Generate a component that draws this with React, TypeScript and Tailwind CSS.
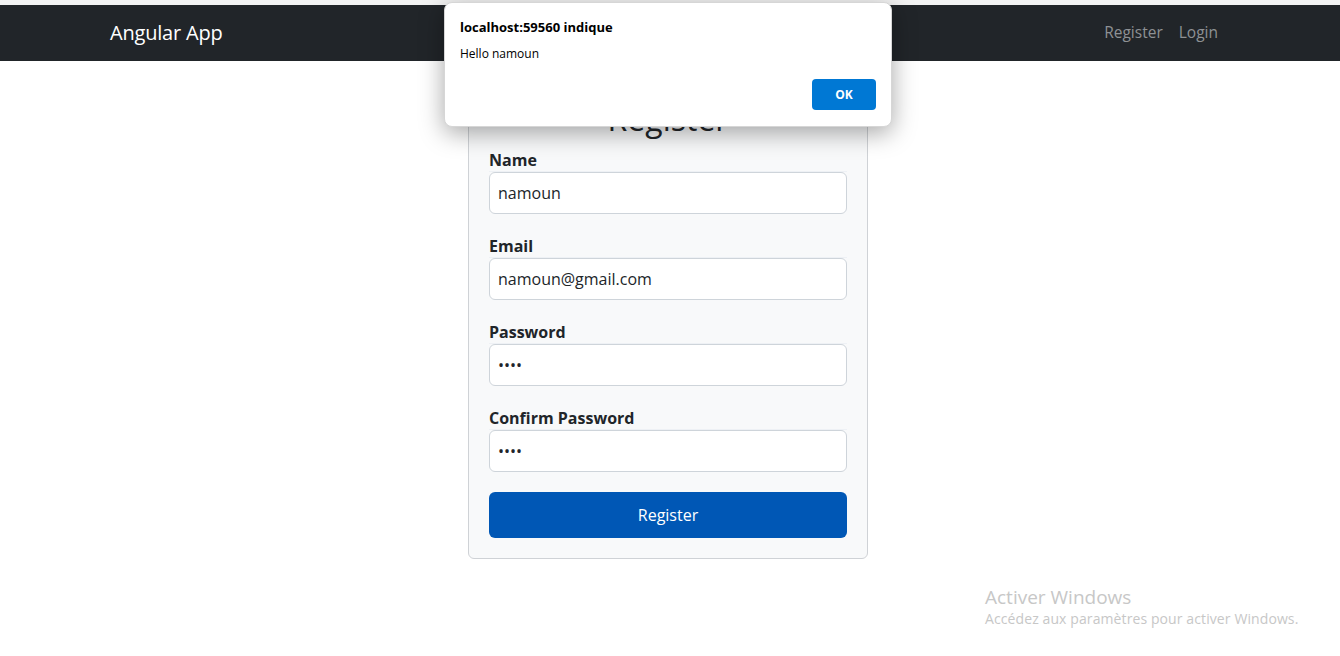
import React from "react";

const font = { fontFamily: '"Open Sans", "Noto Sans", "Liberation Sans", sans-serif' };

function Field({ label, value, type = "text" }: { label: string; value: string; type?: string }) {
  return (
    <div className="flex flex-col">
      <label className="text-[16px] leading-[24px] font-bold text-[#212529] border-b border-[#eef1f5] h-[24px]">{label}</label>
      <input
        readOnly
        type={type}
        value={value}
        className="h-[42px] w-full rounded-[6px] border border-[#ced4da] bg-white px-[8px] text-[16px] text-[#212529] outline-none"
      />
    </div>
  );
}

export default function App() {
  return (
    <div className="relative min-h-[656px] w-full bg-white overflow-hidden" style={font}>
      <div className="h-[5px] bg-[#f3f3f3]" />
      <nav className="h-[56px] bg-[#212529]">
        <div className="mx-auto flex h-full max-w-[1140px] items-center justify-between px-[10px]">
          <span className="text-[20px] text-white tracking-[-0.2px]">Angular App</span>
          <div className="flex items-center pr-[4px]">
            <span className="px-[8px] text-[15.5px] text-[#8e9194]">Register</span>
            <span className="px-[8px] text-[15.5px] text-[#8e9194]">Login</span>
          </div>
        </div>
      </nav>

      <div className="flex justify-center pt-[18px] pr-[4px]">
        <div className="w-[400px] rounded-[6px] border border-[#cfd2d6] bg-[#f8f9fa] px-[20px] pb-[20px] pt-[20px]">
          <h2 className="mb-[10px] text-center text-[32px] leading-[38px] text-[#212529]">Register</h2>
          <div className="flex flex-col gap-[20px]">
            <Field label="Name" value="namoun" />
            <Field label="Email" value="namoun@gmail.com" />
            <Field label="Password" value="abcd" type="password" />
            <Field label="Confirm Password" value="abcd" type="password" />
            <button className="h-[46px] w-full rounded-[6px] bg-[#0057b5] text-[16px] text-white">Register</button>
          </div>
        </div>
      </div>

      <div className="absolute left-[444px] top-[2px] h-[125px] w-[448px] rounded-[8px] bg-white shadow-[0_6px_24px_rgba(0,0,0,0.35)] border border-[#d6d6d6]">
        <div className="pl-[15px] pt-[15px] text-[13px] font-bold leading-[18px] text-black">localhost:59560 indique</div>
        <div className="pl-[15px] pt-[10px] text-[12px] leading-[16px] text-black">Hello namoun</div>
        <div className="absolute right-[15px] top-[76px] flex h-[31px] w-[64px] items-center justify-center rounded-[4px] bg-[#0078d4] text-[12px] font-bold text-white">OK</div>
      </div>

      <div className="absolute left-[985px] top-[584px] text-[#c7c7c7]">
        <div className="text-[19px] leading-[26px]">Activer Windows</div>
        <div className="text-[14px] leading-[18px] tracking-[0.1px]">Accédez aux paramètres pour activer Windows.</div>
      </div>
    </div>
  );
}
